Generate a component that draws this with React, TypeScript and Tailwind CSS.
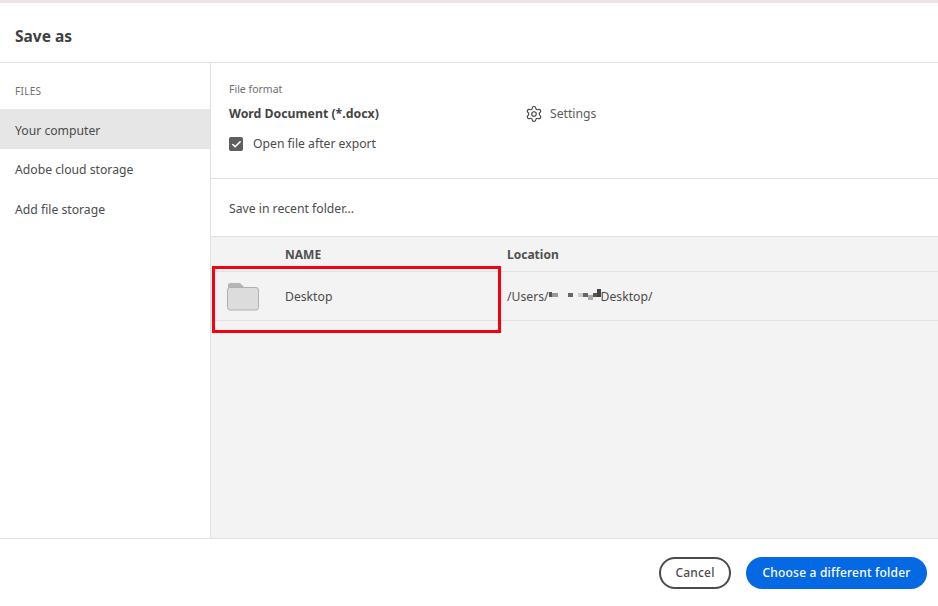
import { Settings, Check } from "lucide-react";

const files = ["Your computer", "Adobe cloud storage", "Add file storage"];

function Redacted() {
  return (
    <svg width="53" height="20" viewBox="0 0 53 20" className="shrink-0">
      <rect x="0" y="6" width="3" height="5" fill="#555" />
      <rect x="3" y="7" width="6" height="4" fill="#999" />
      <rect x="19" y="7" width="5" height="4" fill="#666" />
      <rect x="29" y="7" width="5" height="4" fill="#ccc" />
      <rect x="34" y="7" width="5" height="4" fill="#666" />
      <rect x="39" y="9" width="5" height="5" fill="#aaa" />
      <rect x="44" y="7" width="4" height="4" fill="#555" />
      <rect x="48" y="3" width="4" height="8" fill="#444" />
    </svg>
  );
}

function Folder() {
  return (
    <svg width="33" height="29" viewBox="0 0 33 29">
      <path d="M1 6V3a2 2 0 0 1 2-2h10l5 5z" fill="#b5b5b5" />
      <rect x="0.5" y="5.5" width="31" height="22.5" rx="2.5" fill="#dcdcdc" stroke="#b0b0b0" />
    </svg>
  );
}

export default function App() {
  return (
    <div className="relative flex h-[606px] w-[938px] flex-col overflow-hidden bg-white font-['Noto_Sans',sans-serif] text-[#4b4b4b]">
      <div className="h-[3px] bg-[#eee2e2]" />
      <div className="flex h-[60px] items-center border-b border-[#e1e1e1] px-[15px] pt-[8px]">
        <h1 className="text-[15.5px] font-bold text-[#3f3f3f]">Save as</h1>
      </div>

      <div className="flex h-[475px]">
        <aside className="w-[211px] shrink-0 border-r border-[#e1e1e1]">
          <div className="flex h-[46px] items-center px-[15px] pt-[11px] text-[10px] tracking-[0.3px] text-[#6e6e6e]">FILES</div>
          {files.map((f, i) => (
            <div
              key={f}
              className={`flex h-10 items-center px-[15px] pt-[2px] text-[12.2px] ${i === 0 ? "bg-[#e6e6e6] pt-[4px]" : ""}`}
            >
              {f}
            </div>
          ))}
        </aside>

        <main className="flex min-w-0 flex-1 flex-col">
          <section className="h-[116px] border-b border-[#e1e1e1] px-[18px] pt-[18px]">
            <div className="text-[10.5px] leading-[16px] text-[#6e6e6e]">File format</div>
            <div className="mt-[7px] flex h-5 items-center">
              <span className="w-[296px] text-[12.3px] font-bold text-[#444]">Word Document (*.docx)</span>
              <Settings size={18} strokeWidth={1.5} className="text-[#444]" />
              <span className="ml-[7px] text-[12.2px] text-[#5c5c5c]">Settings</span>
            </div>
            <div className="mt-[10px] flex h-5 items-center gap-[10px]">
              <span className="flex h-[14px] w-[14px] items-center justify-center rounded-[2px] bg-[#5f5f5f]">
                <Check size={11} strokeWidth={3.5} className="text-white" />
              </span>
              <span className="text-[12.2px]">Open file after export</span>
            </div>
          </section>

          <div className="flex h-[57px] items-center px-[18px] pt-[4px] text-[12.2px]">Save in recent folder...</div>

          <section className="flex-1 border-t border-[#e1e1e1] bg-[#f3f3f3]">
            <div className="flex h-[35px] items-center border-b border-[#e1e1e1] pt-[2px] text-[12px] font-bold text-[#505050]">
              <span className="w-[296px] pl-[74px]">NAME</span>
              <span>Location</span>
            </div>
            <div className="flex h-[49px] items-center border-b border-[#e1e1e1] text-[12.2px]">
              <div className="flex w-[296px] items-center">
                <span className="ml-[16px] flex w-[58px]">
                  <Folder />
                </span>
                <span className="pt-[2px]">Desktop</span>
              </div>
              <div className="flex items-center">
                <span className="pt-[2px]">/Users/</span>
                <Redacted />
                <span className="-ml-[1px] pt-[2px]">Desktop/</span>
              </div>
            </div>
          </section>
        </main>
      </div>

      <footer className="flex flex-1 items-start justify-end gap-[15px] border-t border-[#e1e1e1] pt-[18px] pr-[11px]">
        <button className="flex h-[32px] w-[72px] items-center justify-center rounded-full border-2 border-[#4b4b4b] text-[12px] font-medium tracking-[0.2px] text-[#4b4b4b]">
          Cancel
        </button>
        <button className="flex h-[32px] w-[181px] items-center justify-center rounded-full bg-[#0469e3] text-[12px] font-medium tracking-[0.2px] text-white">
          Choose a different folder
        </button>
      </footer>

      <div className="pointer-events-none absolute left-[212px] top-[266px] h-[67px] w-[289px] border-[3px] border-[#f5000f]" />
    </div>
  );
}
